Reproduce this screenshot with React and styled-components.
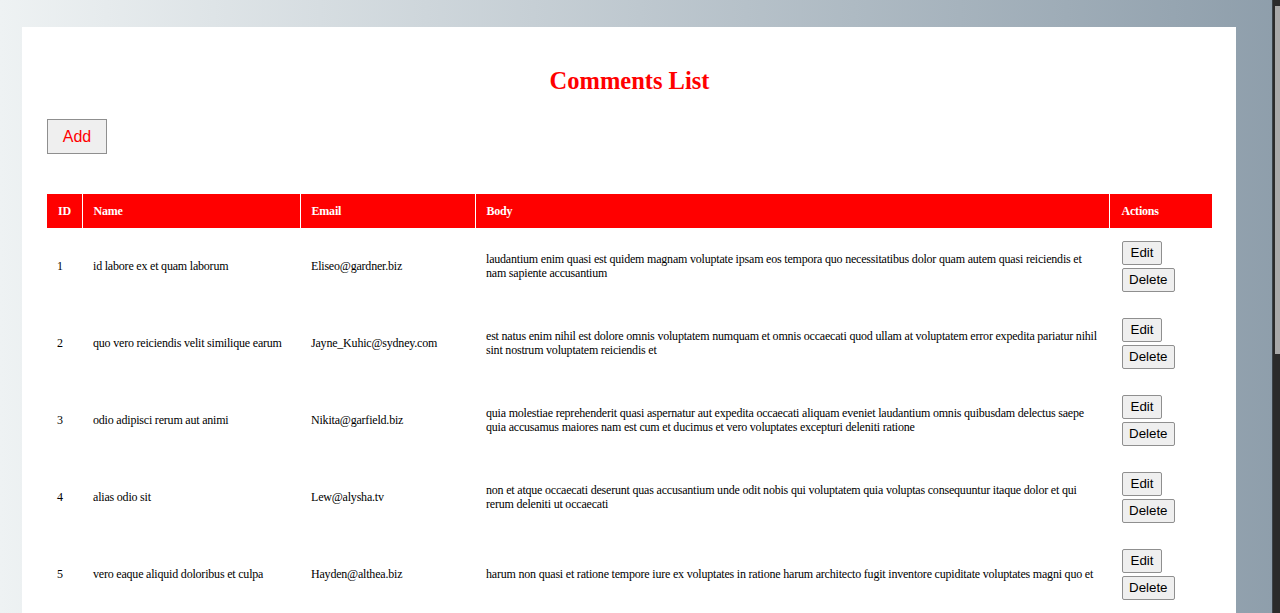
import React from 'react';
import styled, { createGlobalStyle } from 'styled-components';

const GlobalStyle = createGlobalStyle`
  html, body {
    margin: 0;
    padding: 0;
    height: 100%;
    overflow: hidden;
  }
  body {
    font-family: "Liberation Serif", "Times New Roman", serif;
  }
`;

const Page = styled.div`
  min-height: 100vh;
  box-sizing: border-box;
  padding: 27px 44px 0 22px;
  background: linear-gradient(to right, #eef2f3, #8e9eab);
`;

const Card = styled.div`
  background: #fff;
  padding: 20px 24px 30px 25px;
`;

const Title = styled.h2`
  margin: 20px 0 24px;
  text-align: center;
  color: #ff0000;
  font-size: 24.5px;
  line-height: 28px;
  font-weight: bold;
`;

const AddButton = styled.button`
  display: block;
  width: 60px;
  height: 35px;
  padding: 0;
  font-family: "Liberation Sans", Arial, sans-serif;
  font-size: 16px;
  color: #ff0000;
  background: #efefef;
  border: 1px solid #8f8f8f;
  border-radius: 0;
`;

const Table = styled.table`
  width: 100%;
  margin-top: 40px;
  border-collapse: collapse;
  table-layout: fixed;
  font-size: 12px;
  letter-spacing: -0.2px;
`;

const Th = styled.th`
  width: ${p => p.$w}px;
  height: 34px;
  box-sizing: border-box;
  padding: 0 11px;
  background: #ff0000;
  color: #fff;
  text-align: left;
  font-weight: bold;
  border-right: 1px solid #fff;
  &:last-child {
    border-right: none;
    padding-left: 12px;
  }
`;

const Td = styled.td`
  padding: 13px 11px;
  vertical-align: middle;
  color: #000;
  line-height: 13.5px;
  &:first-child {
    padding-left: 10px;
  }
  &:last-child {
    padding-left: 13px;
  }
`;

const Actions = styled.div`
  display: flex;
  flex-direction: column;
  align-items: flex-start;
  gap: 3px;
  letter-spacing: normal;
`;

const SmallButton = styled.button`
  font-family: "Liberation Sans", Arial, sans-serif;
  font-size: 13.33px;
  line-height: 14px;
  padding: 4px 6px;
  min-width: 40px;
  color: #000;
  background: #efefef;
  border: 1px solid #8f8f8f;
  border-radius: 2px;
`;

const Scrollbar = styled.div`
  position: fixed;
  top: 0;
  right: 0;
  width: 7px;
  height: 100vh;
  background: #2b2b2b;
  border-left: 1px solid #3c4348;
`;

const Thumb = styled.div`
  position: absolute;
  top: 6px;
  right: 0;
  width: 5px;
  height: 348px;
  background: #a8a8a8;
`;

const comments = [
  {
    id: 1,
    name: 'id labore ex et quam laborum',
    email: 'Eliseo@gardner.biz',
    body: 'laudantium enim quasi est quidem magnam voluptate ipsam eos tempora quo necessitatibus dolor quam autem quasi reiciendis et nam sapiente accusantium',
  },
  {
    id: 2,
    name: 'quo vero reiciendis velit similique earum',
    email: 'Jayne_Kuhic@sydney.com',
    body: 'est natus enim nihil est dolore omnis voluptatem numquam et omnis occaecati quod ullam at voluptatem error expedita pariatur nihil sint nostrum voluptatem reiciendis et',
  },
  {
    id: 3,
    name: 'odio adipisci rerum aut animi',
    email: 'Nikita@garfield.biz',
    body: 'quia molestiae reprehenderit quasi aspernatur aut expedita occaecati aliquam eveniet laudantium omnis quibusdam delectus saepe quia accusamus maiores nam est cum et ducimus et vero voluptates excepturi deleniti ratione',
  },
  {
    id: 4,
    name: 'alias odio sit',
    email: 'Lew@alysha.tv',
    body: 'non et atque occaecati deserunt quas accusantium unde odit nobis qui voluptatem quia voluptas consequuntur itaque dolor et qui rerum deleniti ut occaecati',
  },
  {
    id: 5,
    name: 'vero eaque aliquid doloribus et culpa',
    email: 'Hayden@althea.biz',
    body: 'harum non quasi et ratione tempore iure ex voluptates in ratione harum architecto fugit inventore cupiditate voluptates magni quo et',
  },
];

export default function App() {
  return (
    <>
      <GlobalStyle />
      <Page>
        <Card>
          <Title>Comments List</Title>
          <AddButton>Add</AddButton>
          <Table>
            <thead>
              <tr>
                <Th $w={35}>ID</Th>
                <Th $w={218}>Name</Th>
                <Th $w={175}>Email</Th>
                <Th $w={634}>Body</Th>
                <Th $w={103}>Actions</Th>
              </tr>
            </thead>
            <tbody>
              {comments.map(c => (
                <tr key={c.id}>
                  <Td>{c.id}</Td>
                  <Td>{c.name}</Td>
                  <Td>{c.email}</Td>
                  <Td>{c.body}</Td>
                  <Td>
                    <Actions>
                      <SmallButton>Edit</SmallButton>
                      <SmallButton>Delete</SmallButton>
                    </Actions>
                  </Td>
                </tr>
              ))}
            </tbody>
          </Table>
        </Card>
      </Page>
      <Scrollbar>
        <Thumb />
      </Scrollbar>
    </>
  );
}
